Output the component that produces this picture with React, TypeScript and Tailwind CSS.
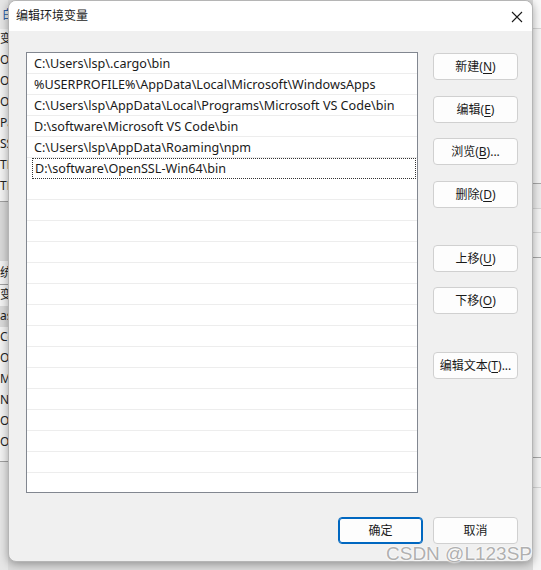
import React from 'react';

const paths = [
  'C:\\Users\\lsp\\.cargo\\bin',
  '%USERPROFILE%\\AppData\\Local\\Microsoft\\WindowsApps',
  'C:\\Users\\lsp\\AppData\\Local\\Programs\\Microsoft VS Code\\bin',
  'D:\\software\\Microsoft VS Code\\bin',
  'C:\\Users\\lsp\\AppData\\Roaming\\npm',
  'D:\\software\\OpenSSL-Win64\\bin',
];

const sideButtons = [
  { label: '新建', key: 'N', mt: 'mt-[1px]' },
  { label: '编辑', key: 'E', mt: 'mt-[16px]' },
  { label: '浏览', key: 'B', tail: '...', mt: 'mt-[15px]' },
  { label: '删除', key: 'D', mt: 'mt-[16px]' },
  { label: '上移', key: 'U', mt: 'mt-[37px]' },
  { label: '下移', key: 'O', mt: 'mt-[15px]' },
  { label: '编辑文本', key: 'T', tail: '...', mt: 'mt-[38px]' },
];

const leftTop = ['白', '变', 'Or', 'Or', 'OI', 'Pa', 'SS', 'TE', 'TM'];
const leftBottom = ['变', 'as', 'Co', 'Or', 'M', 'NI', 'OI', 'OS'];

const font = { fontFamily: '"Noto Sans", "Noto Sans CJK SC", sans-serif' };

const WinButton: React.FC<{
  label: string;
  hotkey?: string;
  tail?: string;
  primary?: boolean;
  className?: string;
}> = ({ label, hotkey, tail, primary, className }) => (
  <button
    className={`h-[27px] w-[85px] rounded-[4px] border bg-[#fdfdfd] text-[12px] text-[#1a1a1a] flex items-center justify-center ${
      primary ? 'border-[#0067c0] shadow-[inset_0_0_0_1px_#0067c0]' : 'border-[#d0d0d0]'
    } ${className ?? ''}`}
  >
    {label}
    {hotkey && (
      <>
        (<span className="underline underline-offset-2">{hotkey}</span>)
      </>
    )}
    {tail}
  </button>
);

export default function App() {
  const emptyRows = Array.from({ length: 15 });

  return (
    <div
      className="relative w-[541px] h-[570px] overflow-hidden bg-[#dcdcdc] flex"
      style={font}
    >
      {/* window behind, left */}
      <div className="w-[8px] h-full bg-[#f3f3f3] overflow-hidden flex flex-col text-[12px] text-[#222] leading-none">
        <div className="h-[29px] bg-[#e6e6e6] pt-[9px] pl-[2px] text-[#2b5fa8]">{leftTop[0]}</div>
        {leftTop.slice(1).map((t, i) => (
          <div key={i} className="h-[21px] pt-[4px] whitespace-nowrap border-b border-[#f3f3f3]">
            {t}
          </div>
        ))}
        <div className="h-[60px] mt-[4px] border-t border-[#a0a0a0] bg-[#d9d9d9]" />
        <div className="h-[24px] pt-[6px] border-b border-[#a0a0a0]">统</div>
        {leftBottom.map((t, i) => (
          <div
            key={i}
            className={`h-[21px] pt-[4px] whitespace-nowrap ${i === 1 ? 'bg-[#dadada]' : ''}`}
          >
            {t}
          </div>
        ))}
        <div className="flex-1 mt-[8px] border-t border-[#a0a0a0] bg-[#e6e6e6]" />
      </div>

      {/* dialog */}
      <div className="w-[525px] h-[562px] flex flex-col rounded-[8px] border border-[#b5b5b5] bg-[#f0f0f0] overflow-hidden shadow-[0_2px_10px_rgba(0,0,0,0.35)] z-10">
        <div className="h-[30px] shrink-0 bg-white flex items-center justify-between pl-[7px] pr-[9px]">
          <span className="text-[12px] text-[#1a1a1a]">编辑环境变量</span>
          <svg width="12" height="12" viewBox="0 0 12 12" className="mt-[1px]">
            <path d="M1 1 L11 11 M11 1 L1 11" stroke="#1a1a1a" strokeWidth="1.1" />
          </svg>
        </div>

        <div className="flex-1 flex flex-col pl-[17px] pr-[14px]">
          <div className="flex mt-[21px]">
            <div className="w-[392px] h-[441px] border border-[#828790] bg-white flex flex-col overflow-hidden">
              {paths.map((p, i) => {
                const last = i === paths.length - 1;
                return (
                  <div
                    key={p}
                    className={`h-[21px] shrink-0 flex items-center pt-[2px] text-[12.6px] text-[#1a1a1a] whitespace-nowrap ${
                      last
                        ? 'ml-[5px] mr-[1px] pl-[2px] border border-dotted border-[#333]'
                        : 'pl-[7px] border-b border-[#ededed]'
                    }`}
                  >
                    {p}
                  </div>
                );
              })}
              {emptyRows.map((_, i) => (
                <div key={i} className="h-[21px] shrink-0 border-b border-[#ededed]" />
              ))}
            </div>

            <div className="ml-[15px] flex flex-col">
              {sideButtons.map((b) => (
                <WinButton
                  key={b.label}
                  label={b.label}
                  hotkey={b.key}
                  tail={b.tail}
                  className={b.mt}
                />
              ))}
            </div>
          </div>

          <div className="flex justify-end gap-[10px] mt-[24px]">
            <WinButton label="确定" primary />
            <WinButton label="取消" />
          </div>
        </div>
      </div>

      {/* window behind, right */}
      <div className="w-[8px] h-full bg-[#f5f5f5] flex flex-col">
        <div className="h-[29px] bg-[#f9f9f9] border-b border-[#d6d6d6]" />
        <div className="h-[155px] border-b border-[#a8a8a8]" />
        <div className="h-[25px] border-b border-[#d6d6d6] bg-[#ededed]" />
        <div className="h-[24px] border-b border-[#d6d6d6]" />
        <div className="h-[25px] border-b border-[#a8a8a8]" />
        <div className="h-[200px] border-b border-[#a8a8a8]" />
        <div className="h-[30px] border-b border-[#d6d6d6]" />
        <div className="flex-1" />
      </div>

      {/* watermark */}
      <div
        className="absolute left-[386px] top-[540px] z-20 text-[19px] text-[#b0b0b0] whitespace-nowrap [text-shadow:0_0_1px_#fff,0_0_2px_#fff,0_0_2px_#fff]"
        style={{ fontFamily: '"Liberation Sans", Arial, sans-serif' }}
      >
        CSDN @L123SP
      </div>
    </div>
  );
}
